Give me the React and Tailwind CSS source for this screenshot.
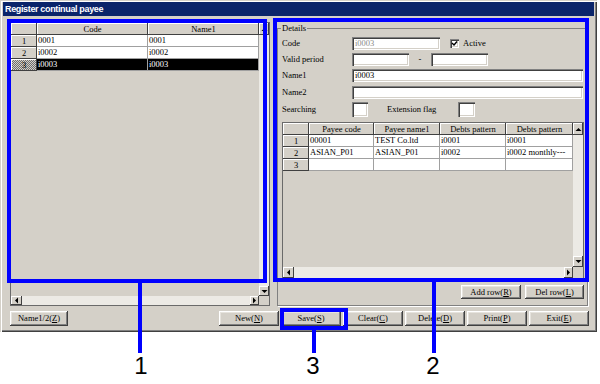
import React from 'react';

const raised =
  'shadow-[inset_-1px_-1px_#404040,inset_1px_1px_#ffffff,inset_-2px_-2px_#808080,inset_2px_2px_#e6e3dd]';
const cellRaised = 'shadow-[inset_-1px_-1px_#404040,inset_1px_1px_#ffffff]';
const sunken =
  'shadow-[inset_1px_1px_#808080,inset_2px_2px_#404040,inset_-1px_-1px_#ffffff,inset_-2px_-2px_#d4d0c8]';

const leftCols = [
  { label: '', w: 'w-[26px]' },
  { label: 'Code', w: 'w-[111px]' },
  { label: 'Name1', w: 'flex-1' },
];

const leftRows = [
  ['0001', '0001'],
  ['i0002', 'i0002'],
  ['i0003', 'i0003'],
];

const payeeCols = [
  { label: '', w: 'w-[26px]' },
  { label: 'Payee code', w: 'w-[65px]' },
  { label: 'Payee name1', w: 'w-[66px]' },
  { label: 'Debts pattern', w: 'w-[66px]' },
  { label: 'Debts pattern', w: 'flex-1' },
];

const payeeRows = [
  ['00001', 'TEST Co.ltd', 'i0001', 'i0001'],
  ['ASIAN_P01', 'ASIAN_P01', 'i0002', 'i0002 monthly---'],
  ['', '', '', ''],
];

function ArrowBtn({ dir, className = '' }) {
  const vertical = dir === 'up' || dir === 'down';
  const pts = {
    up: '0.5,4 3.5,1 6.5,4',
    down: '0.5,1 3.5,4 6.5,1',
    left: '4,0.5 1,3.5 4,6.5',
    right: '1,0.5 4,3.5 1,6.5',
  }[dir];
  return (
    <div className={`flex items-center justify-center bg-[#d4d0c8] ${cellRaised} ${className}`}>
      <svg width={vertical ? 7 : 5} height={vertical ? 5 : 7} viewBox={vertical ? '0 0 7 5' : '0 0 5 7'}>
        <polygon points={pts} fill="#000" />
      </svg>
    </div>
  );
}

function Grid({ cols, rows, selected, upH, downH, hH }) {
  return (
    <div className="flex flex-col h-full border border-[#6a6a6a] bg-[#d4d0c8]">
      <div className="flex flex-1 min-h-0">
        <div className="flex-1 flex flex-col">
          <div className="flex h-[12px] shrink-0">
            {cols.map((c, i) => (
              <div key={i} className={`${c.w} ${cellRaised} flex items-center justify-center`}>
                {c.label}
              </div>
            ))}
          </div>
          {rows.map((r, ri) => {
            const sel = ri === selected;
            return (
              <div key={ri} className="flex h-[12px] shrink-0">
                <div
                  className={`${cols[0].w} ${cellRaised} flex items-center justify-center ${
                    sel
                      ? 'bg-[image:repeating-conic-gradient(#6e6e6e_0_25%,#d4d0c8_0_50%)] bg-[length:2px_2px]'
                      : ''
                  }`}
                >
                  {ri + 1}
                </div>
                {r.map((v, ci) => (
                  <div
                    key={ci}
                    className={`${cols[ci + 1].w} flex items-center pl-[1px] border-r border-b border-[#a0a0a0] whitespace-nowrap overflow-hidden ${
                      sel ? 'bg-black text-white' : 'bg-white'
                    }`}
                  >
                    {v}
                  </div>
                ))}
              </div>
            );
          })}
        </div>
        <div className="w-[10px] flex flex-col">
          <ArrowBtn dir="up" className={upH} />
          <div className="flex-1 bg-[#eceae5]" />
          <ArrowBtn dir="down" className={downH} />
        </div>
      </div>
      <div className={`flex ${hH}`}>
        <ArrowBtn dir="left" className="w-[11px]" />
        <div className="flex-1 bg-[#eceae5]" />
        <ArrowBtn dir="right" className="w-[9px]" />
        <div className="w-[10px] bg-[#d4d0c8]" />
      </div>
    </div>
  );
}

function Btn({ pre, u, post = ')', className = '' }) {
  return (
    <div className={`flex items-center justify-center bg-[#d4d0c8] ${raised} ${className}`}>
      <span>
        {pre}
        <span className="underline">{u}</span>
        {post}
      </span>
    </div>
  );
}

export default function App() {
  return (
    <div className="relative w-[600px] h-[384px] bg-white overflow-hidden font-['Liberation_Serif','Times_New_Roman',serif] text-[8.5px] leading-none text-black">
      {/* window */}
      <div className="w-[597px] h-[332px] bg-[#d4d0c8] pt-[2px] px-[3px] flex flex-col shadow-[inset_1px_1px_#d4d0c8,inset_2px_2px_#ffffff,inset_-1px_-1px_#404040,inset_-2px_-2px_#808080]">
        <div className="h-[14px] bg-[#0a246a] text-white font-['Liberation_Sans',Arial,sans-serif] font-bold text-[9px] tracking-[-0.35px] flex items-center pl-[2px]">
          Register continual payee
        </div>

        <div className="flex mt-[6px] ml-[7px] h-[284px]">
          <div className="w-[260px] h-full">
            <Grid cols={leftCols} rows={leftRows} selected={2} upH="h-[12px]" downH="h-[10px]" hH="h-[9px]" />
          </div>

          <fieldset className="ml-[7px] w-[311px] h-full min-w-0 m-0 border border-[#808080] shadow-[1px_1px_0_#ffffff] pl-[4px] pr-[3px] flex flex-col">
            <legend className="ml-[-1px] px-[1px] leading-[12px]">Details</legend>

            <div className="flex items-center h-[13px] mt-[3px]">
              <span className="w-[70px]">Code</span>
              <div className={`w-[88px] h-full bg-white ${sunken} pl-[3px] flex items-center text-[#8a8a8a]`}>i0003</div>
              <div className={`ml-[10px] w-[9px] h-[9px] bg-white ${sunken} flex items-center justify-center`}>
                <svg width="7" height="7" viewBox="0 0 7 7">
                  <polyline points="1,3 3,5 6,1.5" fill="none" stroke="#000" strokeWidth="1.4" />
                </svg>
              </div>
              <span className="ml-[4px]">Active</span>
            </div>

            <div className="flex items-center h-[13px] mt-[3px]">
              <span className="w-[70px]">Valid period</span>
              <div className={`w-[57px] h-full bg-white ${sunken}`} />
              <span className="w-[22px] text-center">-</span>
              <div className={`w-[57px] h-full bg-white ${sunken}`} />
            </div>

            <div className="flex items-center h-[13px] mt-[3px]">
              <span className="w-[70px]">Name1</span>
              <div className={`flex-1 mr-[1px] h-full bg-white ${sunken} pl-[3px] flex items-center`}>i0003</div>
            </div>

            <div className="flex items-center h-[13px] mt-[4px]">
              <span className="w-[70px]">Name2</span>
              <div className={`flex-1 mr-[1px] h-full bg-white ${sunken}`} />
            </div>

            <div className="flex items-center h-[15px] mt-[3px]">
              <span className="w-[70px]">Searching</span>
              <div className={`w-[16px] h-full bg-white ${sunken}`} />
              <span className="ml-[19px] w-[71px]">Extension flag</span>
              <div className={`w-[17px] h-full bg-white ${sunken}`} />
            </div>

            <div className="mt-[5px] h-[157px]">
              <Grid cols={payeeCols} rows={payeeRows} selected={-1} upH="h-[12px]" downH="h-[11px]" hH="h-[11px]" />
            </div>

            <div className="flex justify-end gap-[4px] mt-[6px] h-[14px]">
              <Btn pre="Add row(" u="R" className="w-[60px]" />
              <Btn pre="Del row(" u="L" className="w-[59px]" />
            </div>
          </fieldset>
        </div>

        <div className="flex mt-[5px] ml-[7px] mr-[5px] h-[15px]">
          <Btn pre="Name1/2(" u="Z" className="w-[58px]" />
          <div className="flex-1" />
          <div className="flex gap-[2px]">
            <Btn pre="New(" u="N" className="w-[60px]" />
            <Btn pre="Save(" u="S" className="w-[60px]" />
            <Btn pre="Clear(" u="C" className="w-[60px]" />
            <Btn pre="Delete(" u="D" className="w-[60px]" />
            <Btn pre="Print(" u="P" className="w-[60px]" />
            <Btn pre="Exit(" u="E" className="w-[60px]" />
          </div>
        </div>
      </div>

      {/* callouts */}
      <div className="absolute left-[7px] top-[19px] w-[260px] h-[264px] border-4 border-[#0000ff]" />
      <div className="absolute left-[273px] top-[18px] w-[316px] h-[264px] border-4 border-[#0000ff]" />
      <div className="absolute left-[280px] top-[308px] w-[68px] h-[22px] border-4 border-[#0000ff]" />
      <div className="absolute left-[138px] top-[283px] w-[4px] h-[70px] bg-[#0000ff]" />
      <div className="absolute left-[312px] top-[330px] w-[4px] h-[23px] bg-[#0000ff]" />
      <div className="absolute left-[432px] top-[282px] w-[4px] h-[71px] bg-[#0000ff]" />
      <span className="absolute left-[131px] top-[354px] w-[20px] text-center font-['Liberation_Sans',Arial,sans-serif] text-[24px] leading-none">1</span>
      <span className="absolute left-[303px] top-[354px] w-[20px] text-center font-['Liberation_Sans',Arial,sans-serif] text-[24px] leading-none">3</span>
      <span className="absolute left-[423px] top-[354px] w-[20px] text-center font-['Liberation_Sans',Arial,sans-serif] text-[24px] leading-none">2</span>
    </div>
  );
}
